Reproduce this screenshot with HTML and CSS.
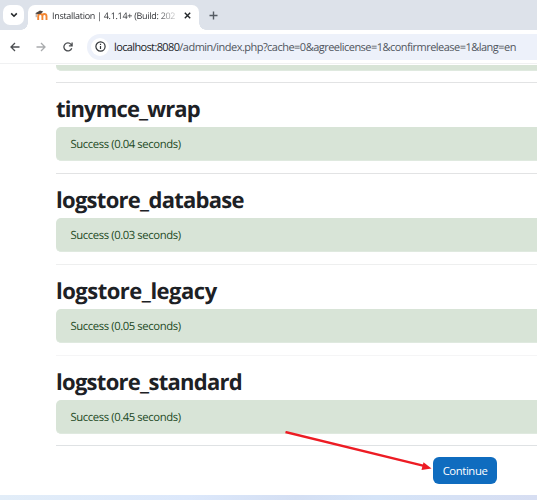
FILE: index.html
```html
<!DOCTYPE html>
<html lang="en">
<head>
<meta charset="utf-8">
<title>Installation</title>
<link rel="stylesheet" href="styles.css">
</head>
<body>
<div class="window">
  <header class="tabs">
    <button class="tab-search" aria-label="Search tabs"><svg width="8" height="6" viewBox="0 0 8 6"><path d="M1.200 1.400 4 4.200 6.800 1.400"/></svg></button>
    <div class="tab">
      <svg class="favicon" width="13" height="11" viewBox="0 0 13 11">
        <path class="m" d="M3.2 10V6.2Q3.2 4 5.3 4T7.4 6.2V10M7.4 10V6.2Q7.4 4 9.4 4T11.5 6.2V10"/>
        <path class="cap" d="M.3 3.3 5 .4 8.2 1.6 5.8 3.8 2 4.2z"/><path class="tassel" d="M1.2 3.4V7.2"/>
      </svg>
      <span class="tab-title">Installation | 4.1.14+ (Build: 202</span>
      <svg class="close" width="7" height="7" viewBox="0 0 7 7"><path d="M.8.8 6.2 6.2M6.2.8.8 6.2"/></svg>
    </div>
    <svg class="plus" width="9" height="9" viewBox="0 0 9 9"><path d="M4.5.5v8M.5 4.5h8"/></svg>
  </header>
  <nav class="toolbar">
    <svg class="nav-icon" width="10" height="10" viewBox="0 0 10 10"><path d="M9.5 5H1.2M5 1 1 5l4 4"/></svg>
    <svg class="nav-icon forward" width="10" height="10" viewBox="0 0 10 10"><path d="M.5 5h8.3M5 1l4 4-4 4"/></svg>
    <svg class="nav-icon reload" width="10" height="10" viewBox="0 0 10 10"><path d="M8.7 6.2A4 4 0 1 1 8 2.4L9 3.6M9.1.6v3.2H5.9"/></svg>
    <div class="address">
      <span class="info"><svg width="11" height="11" viewBox="0 0 11 11"><circle cx="5.5" cy="5.5" r="4.6"/><path d="M5.5 5v3M5.5 2.8v1.2"/></svg></span>
      <span class="url"><b>localhost:8080</b>/admin/index.php?cache=0&amp;agreelicense=1&amp;confirmrelease=1&amp;lang=en</span>
    </div>
  </nav>
  <main class="content">
    <div class="alert cut"></div>
    <section class="plugin"><h2 class="wrap">tinymce_wrap</h2><div class="alert">Success (0.04 seconds)</div></section>
    <section class="plugin"><h2>logstore_database</h2><div class="alert">Success (0.03 seconds)</div></section>
    <section class="plugin faint"><h2 class="legacy">logstore_legacy</h2><div class="alert">Success (0.05 seconds)</div></section>
    <section class="plugin faint last"><h2>logstore_standard</h2><div class="alert">Success (0.45 seconds)</div></section>
    <div class="actions"><button class="continue">Continue</button></div>
  </main>
  <footer class="desktop"></footer>
  <svg class="arrow" width="150" height="44" viewBox="0 0 150 44"><path class="shaft" d="M.5 1 139 34.800"/><path class="head" d="M146.500 37.500 136.500 39 138.500 31.300z"/></svg>
</div>
</body>
</html>
```
FILE: styles.css
```css
* { box-sizing: border-box; }
body { margin: 0; background: #fff; font-family: "Open Sans", "Noto Sans", sans-serif; text-rendering: geometricPrecision; }
button { border: 0; padding: 0; font-family: inherit; }
svg { display: block; flex: none; fill: none; }
.window { position: relative; width: 537px; height: 500px; overflow: hidden; display: flex; flex-direction: column; }
.tabs { flex: none; height: 30px; background: #dde2ea; display: flex; align-items: flex-start; padding-left: 3px; }
.tab-search { width: 21px; height: 20px; margin-top: 5px; border-radius: 7px; background: #fff; display: flex; align-items: center; justify-content: center; }
.tab-search svg { stroke: #24272a; stroke-width: 1.6; }
.tab { position: relative; width: 171px; height: 25px; margin: 5px 0 0 4px; padding: 0 0 4px 7px; background: #fff; border-radius: 7px 7px 0 0; display: flex; align-items: center; }
.tab::before, .tab::after { content: ""; position: absolute; bottom: 0; width: 7px; height: 7px; }
.tab::before { left: -7px; background: radial-gradient(circle at 0 0, transparent 6.5px, #fff 7px); }
.tab::after { right: -7px; background: radial-gradient(circle at 100% 0, transparent 6.5px, #fff 7px); }
.m { stroke: #f38632; stroke-width: 1.9; }
.cap { fill: #4c4541; }
.tassel { stroke: #81756e; stroke-width: .7; }
.tab-title { width: 125px; margin-left: 4px; font-size: 9px; letter-spacing: -.29px; line-height: 20px; color: #303236; white-space: nowrap; -webkit-mask-image: linear-gradient(90deg, #000 104px, transparent 128px); mask-image: linear-gradient(90deg, #000 104px, transparent 128px); }
.close { margin-left: 7px; stroke: #222629; stroke-width: 1.4; }
.plus { margin: 11px 0 0 10px; stroke: #555b63; stroke-width: 1.4; }
.toolbar { flex: none; height: 34px; background: #fff; border-bottom: 1px solid #f0f1f2; display: flex; align-items: center; padding-left: 10px; }
.nav-icon { stroke: #4b4e51; stroke-width: 1.3; }
.forward { margin-left: 16px; stroke: #a9abad; }
.reload { margin-left: 17px; }
.address { height: 26px; flex: 1; min-width: 0; margin-left: 14px; padding-left: 4px; background: #edf1fa; border-radius: 13px 0 0 13px; display: flex; align-items: center; }
.info { flex: none; width: 18px; height: 18px; border-radius: 50%; background: #fff; display: flex; align-items: center; justify-content: center; }
.info svg { stroke: #303337; stroke-width: 1.2; }
.url { margin-left: 5px; padding-top: 1px; font-size: 11px; letter-spacing: -.52px; color: #515760; white-space: nowrap; }
.url b { font-weight: 400; color: #202327; letter-spacing: -.63px; }
.content { height: 431px; padding-left: 56px; display: flex; flex-direction: column; }
.alert { height: 34px; padding-left: 14.500px; border-bottom: 1px solid #dfe9df; border-radius: 5px 0 0 5px; background: #d8e4d7; color: #234a25; font-size: 11.300px; letter-spacing: -.41px; line-height: 35px; white-space: nowrap; }
.alert.cut { height: 6px; margin: 1px 0 11px; border-radius: 0 0 0 5px; flex: none; }
.plugin { flex: none; height: 91px; border-top: 1px solid #e2e3e4; }
.plugin.faint { border-color: #eeefef; }
.plugin.last { height: 90px; border-color: #f5f5f6; }
h2 { height: 44px; margin: 0; padding-top: 1px; color: #1d2125; font-size: 22px; font-weight: 700; line-height: 51px; letter-spacing: -.72px; }
.wrap { letter-spacing: -.87px; }
.legacy { letter-spacing: -.5px; }
.actions { border-top: 1px solid #dfe2e4; padding: 11px 0 0 377px; }
.continue { display: block; width: 64px; height: 27px; border-radius: 6px; background: #0f6cbf; color: #fff; font-size: 11.300px; letter-spacing: -.4px; }
.desktop { height: 5px; background: linear-gradient(90deg, #e2edf8, #dce8fb 35%, #d4dff3 55%, #d5e4f8 70%, #d7def2); }
.arrow { position: absolute; left: 285px; top: 431px; }
.shaft { stroke: #ed1c24; stroke-width: 2.4; }
.head { fill: #ed1c24; }
```
